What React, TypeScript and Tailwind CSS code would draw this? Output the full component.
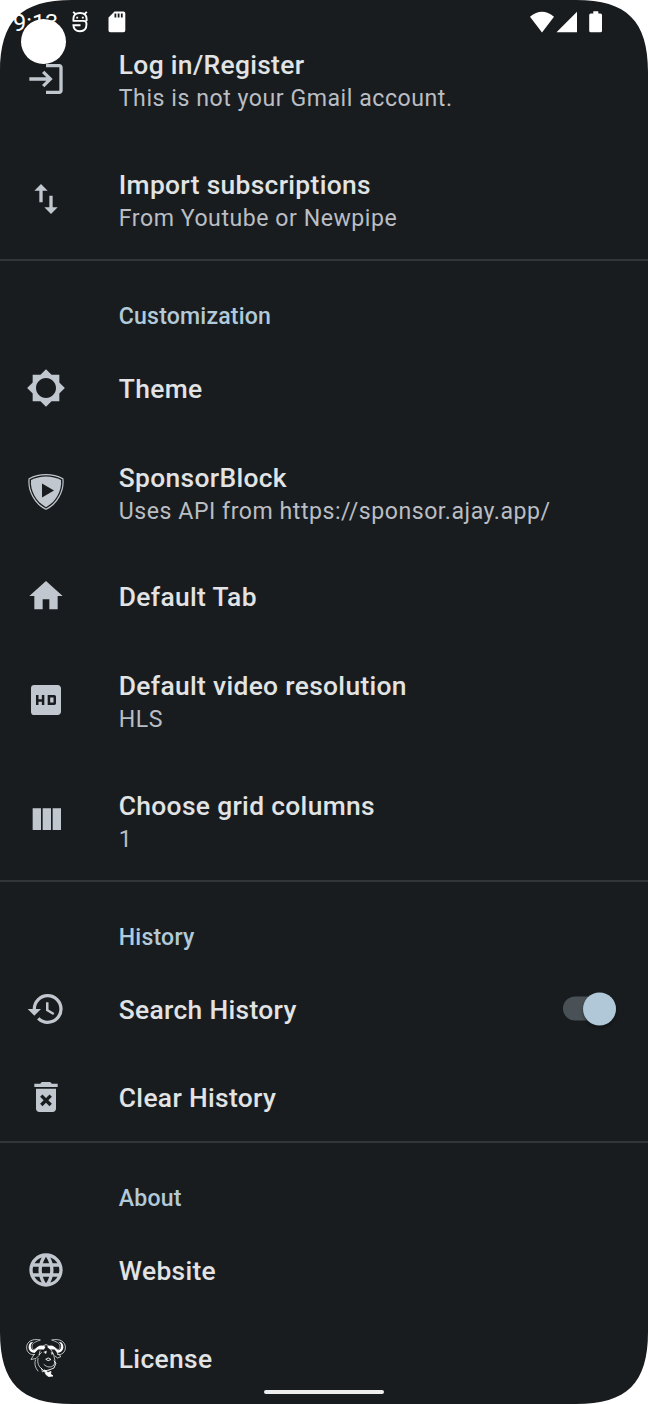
import type { ReactNode } from 'react';
import {
  MdBrightness5,
  MdDeleteForever,
  MdHd,
  MdHistory,
  MdHome,
  MdLanguage,
  MdLogin,
} from 'react-icons/md';

const iconClass = 'size-10 text-[#c1c7ce]';

function Row({ icon, title, summary, trailing }: { icon: ReactNode; title: string; summary?: string; trailing?: ReactNode }) {
  return (
    <div className={`flex shrink-0 items-center pl-[26px] pr-8 ${summary ? 'h-[120px]' : 'h-[88px]'}`}>
      <div className="mr-[52.8px] flex w-10 shrink-0 justify-center pb-[2px]">{icon}</div>
      <div className={`grow whitespace-nowrap ${summary ? 'pt-[4px]' : 'pt-px'}`}>
        <div className="text-[26.4px] leading-[33px] font-medium tracking-[0.32px] text-[#e1e3e5]">{title}</div>
        {summary && <div className="text-[23.1px] leading-[33px] tracking-[0.54px] text-[#b9bec4]">{summary}</div>}
      </div>
      {trailing}
    </div>
  );
}

function Category({ children }: { children: string }) {
  return (
    <div className="-mt-px h-[86px] shrink-0 border-t-2 border-[#323638] pt-[42px] pl-[118.8px] text-[23.1px] leading-[28px] font-medium tracking-[0.18px] text-[#b1cad9]">
      {children}
    </div>
  );
}

function SwapIcon() {
  return (
    <svg viewBox="0 0 24 24" fill="currentColor" className={iconClass}>
      <path d="M16 17.01V10h-2v7.01h-3L15 21l4-3.99h-3zM9 3L5 6.99h3V14h2V6.99h3L9 3z" />
    </svg>
  );
}

function ColumnsIcon() {
  return (
    <svg viewBox="0 0 24 24" fill="currentColor" className={iconClass}>
      <path d="M10 18h5V5h-5v13zm-6 0h5V5H4v13zM16 5v13h5V5h-5z" />
    </svg>
  );
}

function ShieldIcon() {
  return (
    <svg viewBox="0 0 36 36" className="size-9 text-[#c1c7ce]">
      <path d="M18 .7C24 .7 30 2.200 34.900 4.800C36.300 17 29 30 18 35.300C7 30 -.3 17 1.100 4.800C6 2.200 12 .7 18 .7Z" fill="none" stroke="currentColor" strokeWidth="1.200" />
      <path d="M18 2.600C23.500 2.600 28.500 3.900 33 6.100C34 16.500 28 28 18 33.200C8 28 2 16.500 3 6.100C7.500 3.900 12.500 2.600 18 2.600Z" fill="currentColor" />
      <path d="M14 9.500V23.500L26 16.500Z" fill="#191c1e" />
    </svg>
  );
}

function GnuIcon() {
  return (
    <svg viewBox="0 0 40 40" className="size-10" fill="none" stroke="#fff" strokeLinecap="round" strokeLinejoin="round">
      <path d="M14 2C6 0 .6 4 .6 9.500C.7 14 4 17.500 8.500 16.500M26 2C34 0 39.400 4 39.400 9.500C39.300 14 36 17.500 31.500 16.500" strokeWidth=".7" />
      <path d="M14 2C10 4 6 4.500 6 9C6 12 8 12 10 10.500M26 2C30 4 34 4.500 34 9C34 12 32 12 30 10.500" strokeWidth=".6" />
      <path d="M4.500 4.500C.8 8.500 2.800 14.500 8.500 15L12 11.500L18 11.500L19.500 8.800C15 6.500 12 7.500 9.500 11C7.500 13.500 4.800 11.500 4.800 8.500C4.800 6.500 6 5 7.500 3.800Z" fill="#fff" stroke="none" />
      <path d="M35.500 4.500C39.200 8.500 37.200 14.500 31.500 15L28.500 11.500L24 11.500L21 8.800C25 6.500 28 7.500 30.500 11C32.500 13.500 35.200 11.500 35.200 8.500C35.200 6.500 34 5 32.500 3.800Z" fill="#fff" stroke="none" />
      <path d="M8 16.500L5 21.500L10 20.500L13 17.500M31 15L35 18.500L31.500 20L29 18M17 8L20 6.500L23 8" strokeWidth=".7" />
      <path d="M9.500 22C8 26 9.500 30 12 33M12 20.500C11 25 13 29 15.500 30.500L16.500 34L18.500 33" strokeWidth=".7" />
      <path d="M14 13L13 17L15.500 14.500M25 12L27.500 16L29 23L28 27C25 30 21 29.500 18 26.500" strokeWidth=".7" />
      <path d="M18 14L20.500 13L20 15.500ZM25.500 14.500L27 15L26 16.500Z" fill="#fff" strokeWidth=".4" />
      <path d="M20 21Q22 18.500 25 21.500L22.500 22.500ZM28 23L30 25L28 30L23 32M15 30L18 33L23 32" strokeWidth=".9" />
      <path d="M18.500 32L22 34.500L25 33.500L24.500 36L27 38L22.500 38.500L20 36.500Z" fill="#fff" strokeWidth=".8" />
    </svg>
  );
}

function Switch() {
  return (
    <div role="switch" aria-checked="true" className="flex h-[24px] w-[53px] items-center justify-end rounded-full bg-[#495157] -translate-y-[1.500px]">
      <div className="size-[33px] shrink-0 rounded-full bg-[#b1c8d8] shadow-[0_2px_3px_rgba(0,0,0,0.4)]" />
    </div>
  );
}

function FaceIcon() {
  return (
    <svg viewBox="0 0 16 22" className="-ml-px h-[22px] w-4" fill="none" stroke="#fff" strokeWidth="1.900">
      <path d="M1.200 .8L3.500 3.200M14.800 .8L12.500 3.200M1.400 9.800V8Q1.400 2 8 2T14.600 8V10M.6 9.900H11.500Q14.500 9.900 14.500 13Q14.500 20.200 8 20.200Q1.600 20.200 1.400 14.300H8.500" />
      <path d="M5.200 5.800V7.600M10.800 5.800V7.600" />
    </svg>
  );
}

function StatusBar() {
  return (
    <div className="absolute inset-x-0 top-0 h-11 text-white">
      <div className="flex h-11 items-center pl-[13px] pr-[45px]">
        <span className="w-[60px] pt-[3px] text-[23.500px] leading-none">9:13</span>
        <FaceIcon />
        <svg viewBox="0 0 18 22" className="ml-[20px] h-[22px] w-[18px]" fill="currentColor">
          <path d="M6.500 .5H15.500Q17.300 .5 17.300 2.300V19.500Q17.300 21.300 15.500 21.300H2.300Q.5 21.300 .5 19.500V6.500ZM6.500 2.500V6.500H8.300V2.500ZM9.700 2.500V6.500H11.500V2.500ZM12.900 2.500V6.500H14.700V2.500Z" fillRule="evenodd" />
        </svg>
        <div className="grow" />
        <svg viewBox="0 0 73 22" className="h-[22px] w-[73px]" fill="currentColor">
          <path d="M0 5.700Q12 -4.200 24 5.700L12 21.500ZM26.500 21.300L47 .8V21.300ZM59.700 2.500H63.300V.3H68.300V2.500H70.500Q72 2.500 72 4V19.800Q72 21.300 70.500 21.300H60.700Q59.200 21.300 59.200 19.800V4Q59.200 2.500 60.700 2.500Z" />
        </svg>
      </div>
      <div className="absolute top-[19px] left-[21px] size-[45px] rounded-full bg-white" />
    </div>
  );
}

function Corner({ className }: { className: string }) {
  return (
    <svg viewBox="0 0 72 72" className={`absolute size-[72px] ${className}`}>
      <path d="M0 0H72C21 0 0 21 0 72Z" fill="#fff" />
    </svg>
  );
}

export default function App() {
  return (
    <div className="relative flex h-[1404px] w-[648px] flex-col overflow-hidden bg-[#191c1e] pt-5 font-[Roboto,sans-serif]">
      <Row icon={<MdLogin className={iconClass} />} title="Log in/Register" summary="This is not your Gmail account." />
      <Row icon={<SwapIcon />} title="Import subscriptions" summary="From Youtube or Newpipe" />
      <Category>Customization</Category>
      <Row icon={<MdBrightness5 className={iconClass} />} title="Theme" />
      <Row icon={<ShieldIcon />} title="SponsorBlock" summary="Uses API from https://sponsor.ajay.app/" />
      <Row icon={<MdHome className={iconClass} />} title="Default Tab" />
      <Row icon={<MdHd className={iconClass} />} title="Default video resolution" summary="HLS" />
      <Row icon={<ColumnsIcon />} title="Choose grid columns" summary="1" />
      <Category>History</Category>
      <Row icon={<MdHistory className={iconClass} />} title="Search History" trailing={<Switch />} />
      <Row icon={<MdDeleteForever className={iconClass} />} title="Clear History" />
      <Category>About</Category>
      <Row icon={<MdLanguage className={iconClass} />} title="Website" />
      <Row icon={<GnuIcon />} title="License" />
      <StatusBar />
      <div className="absolute bottom-[10px] left-[264px] h-1 w-[120px] rounded-full bg-[#eeeeee]" />
      <Corner className="top-0 left-0" />
      <Corner className="top-0 right-0 rotate-90" />
      <Corner className="right-0 bottom-0 rotate-180" />
      <Corner className="bottom-0 left-0 -rotate-90" />
    </div>
  );
}
